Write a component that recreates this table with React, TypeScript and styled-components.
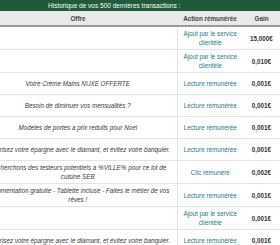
import React from "react";
import styled, { createGlobalStyle } from "styled-components";

const colors = {
    green: "#1f5a3a",
    headBg: "#e9e9e9",
    headBorder: "#9a9a9a",
    rowBorder: "#e4e4e4",
    text: "#3a3a3a",
    link: "#2a7785",
};

type Transaction = {
    offer: string;
    action: string;
    gain: string;
};

const transactions: Transaction[] = [
    { offer: "", action: "Ajout par le service clientèle", gain: "15,000€" },
    { offer: "", action: "Ajout par le service clientèle", gain: "0,010€" },
    { offer: "Votre Crème Mains NUXE OFFERTE", action: "Lecture rémunérée", gain: "0,001€" },
    { offer: "Besoin de diminuer vos mensualités ?", action: "Lecture rémunérée", gain: "0,001€" },
    { offer: "Modeles de portes a prix reduits pour Noel", action: "Lecture rémunérée", gain: "0,001€" },
    {
        offer: "Sécurisez votre épargne avec le diamant, et évitez votre banquier.",
        action: "Lecture rémunérée",
        gain: "0,001€",
    },
    {
        offer: "Recherchons des testeurs potentiels à %VILLE% pour ce lot de cuisine SEB",
        action: "Clic rémunéré",
        gain: "0,002€",
    },
    {
        offer: "Documentation gratuite - Tablette incluse - Faites le métier de vos rêves !",
        action: "Lecture rémunérée",
        gain: "0,001€",
    },
    { offer: "", action: "Ajout par le service clientèle", gain: "0,001€" },
    {
        offer: "Sécurisez votre épargne avec le diamant, et évitez votre banquier.",
        action: "Lecture rémunérée",
        gain: "0,001€",
    },
];

const App: React.FC = () => (
    <>
        <GlobalStyle />
        <Viewport>
            <Table>
                <Caption>Historique de vos 500 dernières transactions :</Caption>
                <colgroup>
                    <col style={{ width: 198 }} />
                    <col style={{ width: 66 }} />
                    <col style={{ width: 37 }} />
                </colgroup>
                <thead>
                    <tr>
                        <HeadCell>Offre</HeadCell>
                        <HeadCell>Action rémunérée</HeadCell>
                        <HeadCell>Gain</HeadCell>
                    </tr>
                </thead>
                <tbody>
                    {transactions.map((t, i) => (
                        <Row key={i}>
                            <OfferCell>{t.offer}</OfferCell>
                            <ActionCell>
                                <ActionLink href="#">{t.action}</ActionLink>
                            </ActionCell>
                            <GainCell>{t.gain}</GainCell>
                        </Row>
                    ))}
                </tbody>
            </Table>
        </Viewport>
    </>
);

const GlobalStyle = createGlobalStyle`
    html, body {
        margin: 0;
        padding: 0;
        background: #ffffff;
        font-family: "Liberation Sans", Arial, sans-serif;
    }
`;

const Viewport = styled.div`
    width: 280px;
    height: 245px;
    overflow: hidden;
    display: flex;
    align-items: flex-start;
    justify-content: flex-end;
`;

const Table = styled.table`
    width: 301px;
    flex-shrink: 0;
    table-layout: fixed;
    border-collapse: collapse;
    font-size: 6.3px;
    color: ${colors.text};
`;

const Caption = styled.caption`
    height: 11px;
    line-height: 11px;
    padding-left: 69px;
    text-align: left;
    background: ${colors.green};
    color: #ffffff;
    font-size: 6.5px;
`;

const HeadCell = styled.th`
    height: 14px;
    padding: 0 2px;
    background: ${colors.headBg};
    border-bottom: 2px solid ${colors.headBorder};
    font-weight: bold;
    color: #444444;
    text-align: center;
`;

const Row = styled.tr`
    border-top: 1px solid ${colors.rowBorder};
`;

const Cell = styled.td`
    height: 17px;
    padding: 2px 3px;
    line-height: 9px;
    text-align: center;
    vertical-align: middle;
`;

const OfferCell = styled(Cell)`
    font-style: italic;
`;

const ActionCell = styled(Cell)`
    border-left: 1px solid ${colors.rowBorder};
`;

const ActionLink = styled.a`
    color: ${colors.link};
    text-decoration: none;
`;

const GainCell = styled(Cell)`
    font-weight: bold;
    color: #333333;
`;

export default App;
